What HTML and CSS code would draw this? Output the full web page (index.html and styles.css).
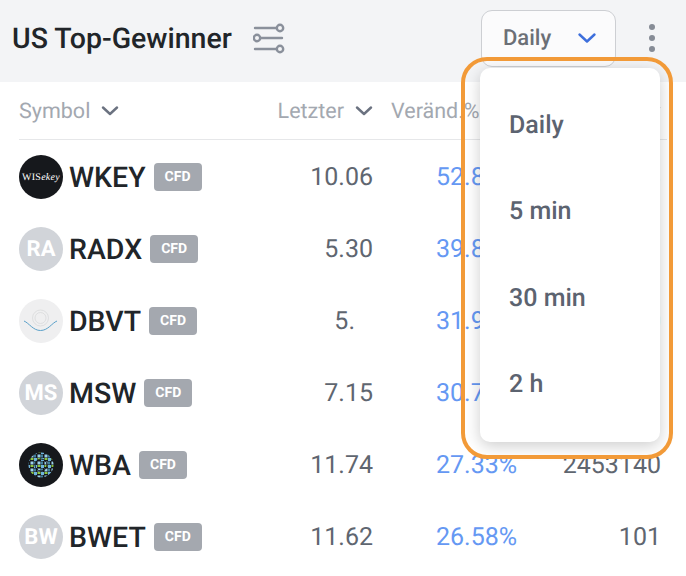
FILE: index.html
```html
<!DOCTYPE html>
<html lang="de">
<head>
  <meta charset="UTF-8" />
  <meta name="viewport" content="width=device-width, initial-scale=1.0"/>
  <title>US Top-Gewinner</title>
  <link rel="stylesheet" href="styles.css">
</head>
<body>

<div class="page">
  <header class="topbar">
    <h1 class="title">US Top-Gewinner</h1>
    <svg class="filter-icon" width="32" height="32" viewBox="0 0 32 32" fill="none" stroke="#8a909b" stroke-width="2.4" stroke-linecap="round">
      <path d="M2 6H23.5"/>
      <circle cx="27" cy="6" r="3.2"/>
      <circle cx="4" cy="16" r="3.2"/>
      <path d="M7.5 16H29"/>
      <path d="M2 27H23.5"/>
      <circle cx="27" cy="27" r="3.2"/>
    </svg>
    <button class="period-btn">
      <span>Daily</span>
      <svg width="20" height="12" viewBox="0 0 20 12" fill="none" stroke="#3d6fdc" stroke-width="2.4" stroke-linecap="round" stroke-linejoin="round">
        <path d="M2.5 2.5L10 9.5L17.5 2.5"/>
      </svg>
    </button>
    <div class="more">
      <i></i><i></i><i></i>
    </div>
  </header>

  <div class="table-head row-grid">
    <div class="th">Symbol
      <svg width="18" height="10" viewBox="0 0 18 10" fill="none" stroke="#6b7280" stroke-width="2.4" stroke-linecap="round" stroke-linejoin="round"><path d="M2 1.5L9 8L16 1.5"/></svg>
    </div>
    <div class="th th-last">Letzter
      <svg width="18" height="10" viewBox="0 0 18 10" fill="none" stroke="#6b7280" stroke-width="2.4" stroke-linecap="round" stroke-linejoin="round"><path d="M2 1.5L9 8L16 1.5"/></svg>
    </div>
    <div class="th th-change">Veränd.%</div>
    <div class="th">
      <svg width="18" height="10" viewBox="0 0 18 10" fill="none" stroke="#6b7280" stroke-width="2.4" stroke-linecap="round" stroke-linejoin="round"><path d="M2 1.5L9 8L16 1.5"/></svg>
    </div>
  </div>

  <div class="rows">
    <div class="row row-grid">
      <div class="symbol">
        <span class="logo logo-dark"><span class="wisekey">WIS<em>ekey</em></span></span>
        <span class="ticker">WKEY</span><span class="badge">CFD</span>
      </div>
      <div class="last">10.06</div>
      <div class="change">52.81%</div>
      <div class="volume">1263</div>
    </div>

    <div class="row row-grid">
      <div class="symbol">
        <span class="logo logo-grey">RA</span>
        <span class="ticker">RADX</span><span class="badge">CFD</span>
      </div>
      <div class="last">5.30</div>
      <div class="change">39.81%</div>
      <div class="volume">1041</div>
    </div>

    <div class="row row-grid">
      <div class="symbol">
        <span class="logo logo-light">
          <svg width="44" height="44" viewBox="0 0 44 44" fill="none">
            <circle cx="21.5" cy="19" r="8" stroke="#d9dadc" stroke-width="0.8"/>
            <circle cx="21.5" cy="19" r="5.5" stroke="#d9dadc" stroke-width="0.8"/>
            <path d="M5 22C10 24 14 31.5 21.5 31.5C29 31.5 33 24 38 22" stroke="#5aa0c8" stroke-width="1"/>
          </svg>
        </span>
        <span class="ticker">DBVT</span><span class="badge">CFD</span>
      </div>
      <div class="last last-short">5.</div>
      <div class="change">31.92%</div>
      <div class="volume">1200</div>
    </div>

    <div class="row row-grid">
      <div class="symbol">
        <span class="logo logo-grey">MS</span>
        <span class="ticker">MSW</span><span class="badge">CFD</span>
      </div>
      <div class="last">7.15</div>
      <div class="change">30.78%</div>
      <div class="volume">1011</div>
    </div>

    <div class="row row-grid">
      <div class="symbol">
        <span class="logo logo-dark">
          <svg width="44" height="44" viewBox="0 0 44 44">
            <defs>
              <pattern id="mesh" width="7" height="7" patternUnits="userSpaceOnUse" x="1" y="1">
                <rect width="3" height="3" fill="#6fb4dc"/>
                <rect x="3.5" y="3.5" width="3" height="3" fill="#9bd0ea"/>
                <rect x="3.5" width="3" height="2" fill="#8cc63f"/>
                <rect y="3.5" width="2" height="3" fill="#3f7f9c"/>
              </pattern>
            </defs>
            <circle cx="22" cy="22" r="12.5" fill="url(#mesh)"/>
            <circle cx="22" cy="22" r="6" fill="none" stroke="#16181c" stroke-width="1"/>
          </svg>
        </span>
        <span class="ticker">WBA</span><span class="badge">CFD</span>
      </div>
      <div class="last">11.74</div>
      <div class="change">27.33%</div>
      <div class="volume">2453140</div>
    </div>

    <div class="row row-grid">
      <div class="symbol">
        <span class="logo logo-grey">BW</span>
        <span class="ticker">BWET</span><span class="badge">CFD</span>
      </div>
      <div class="last">11.62</div>
      <div class="change">26.58%</div>
      <div class="volume">101</div>
    </div>
  </div>

  <div class="dropdown">
    <div class="dropdown-item">Daily</div>
    <div class="dropdown-item">5 min</div>
    <div class="dropdown-item">30 min</div>
    <div class="dropdown-item">2 h</div>
  </div>
  <div class="highlight"></div>
</div>

</body>
</html>
```

FILE: styles.css
```css
* {
  box-sizing: border-box;
}

html, body {
  margin: 0;
  padding: 0;
  background: #fff;
}

.page {
  position: relative;
  width: 686px;
  height: 576px;
  overflow: hidden;
  font-family: Roboto, "Liberation Sans", sans-serif;
  text-rendering: geometricPrecision;
}

/* Top bar */
.topbar {
  display: flex;
  align-items: center;
  height: 82px;
  padding: 0 31px 6px 12px;
  background: #f3f4f6;
}

.title {
  margin: 0;
  font-size: 28.5px;
  font-weight: 500;
  color: #212529;
}

.filter-icon {
  margin-left: 21px;
}

.period-btn {
  display: flex;
  align-items: center;
  justify-content: space-between;
  width: 135px;
  height: 57px;
  margin-left: auto;
  padding: 0 18px 0 21px;
  background: #fbfbfc;
  border: 1px solid #cdcfd3;
  border-radius: 11px;
  font-family: inherit;
  text-rendering: inherit;
  font-size: 22px;
  font-weight: 500;
  color: #6b6f76;
}

.more {
  display: flex;
  flex-direction: column;
  gap: 5px;
  margin-left: 33px;
}

.more i {
  width: 6px;
  height: 6px;
  border-radius: 50%;
  background: #868c96;
}

/* Table */
.row-grid {
  display: grid;
  grid-template-columns: 274px 80px 1fr auto;
  margin: 0 25px 0 19px;
}

.table-head {
  align-items: center;
  height: 58px;
  margin-right: 19px;
  padding: 1px 6px 0 0;
  border-bottom: 1px solid #e6e7e9;
}

.th {
  display: flex;
  align-items: center;
  gap: 11px;
  font-size: 21.5px;
  color: #a3a8b0;
  white-space: nowrap;
}

.th-last {
  justify-content: flex-end;
  margin-left: -40px;
}

.th-change {
  margin-left: 18px;
}

.rows {
  padding-top: 1px;
}

.row {
  align-items: center;
  height: 72px;
  font-size: 25px;
  color: #5f6670;
}

.symbol {
  display: flex;
  align-items: center;
}

.logo {
  display: flex;
  align-items: center;
  justify-content: center;
  flex: none;
  width: 44px;
  height: 44px;
  border-radius: 50%;
  overflow: hidden;
}

.logo-dark {
  background: #16181c;
}

.logo-grey {
  background: #d1d4d9;
  color: #fff;
  font-size: 22px;
  font-weight: 700;
}

.logo-light {
  background: #efeff0;
}

.wisekey {
  font-family: "Liberation Serif", serif;
  font-size: 10px;
  letter-spacing: 0.3px;
  color: #fff;
}

.ticker {
  margin-left: 6px;
  font-size: 28.5px;
  font-weight: 500;
  color: #212529;
}

.badge {
  margin-left: 8px;
  padding: 0 11px;
  height: 28px;
  line-height: 28px;
  background: #a4a8af;
  border-radius: 4px;
  font-size: 14px;
  font-weight: 700;
  color: #fff;
}

.last {
  text-align: right;
}

.last-short {
  padding-right: 18px;
}

.change {
  padding-left: 63px;
  color: #6598f3;
  white-space: nowrap;
}

.volume {
  text-align: right;
}

/* Open period menu */
.dropdown {
  position: absolute;
  top: 68px;
  left: 480px;
  width: 180px;
  height: 374px;
  padding: 14px 29px;
  background: #fff;
  border-radius: 10px;
  box-shadow: 0 4px 16px rgba(0, 0, 0, 0.2);
}

.dropdown-item {
  display: flex;
  align-items: center;
  height: 86.5px;
  font-size: 25px;
  font-weight: 500;
  color: #5c6370;
}

.highlight {
  position: absolute;
  top: 57px;
  left: 461px;
  width: 212px;
  height: 402px;
  border: 4px solid #f29a38;
  border-radius: 26px;
}
```
